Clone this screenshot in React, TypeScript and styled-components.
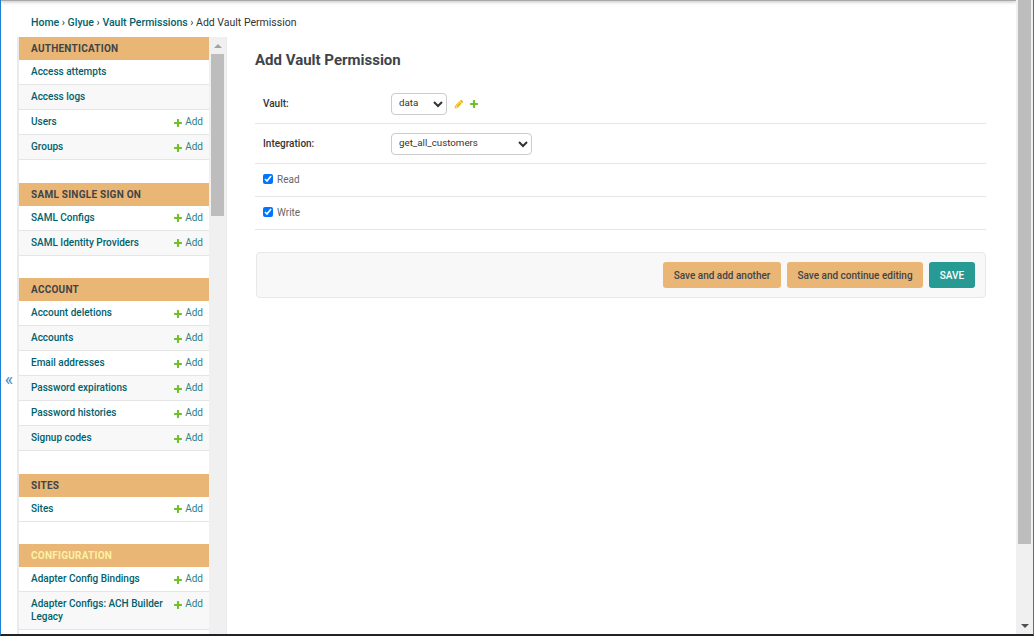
import React from "react";
import styled, { createGlobalStyle } from "styled-components";

const GlobalStyle = createGlobalStyle`
  html, body {
    margin: 0;
    padding: 0;
    overflow: hidden;
    background: #fff;
    font-family: Roboto, "Liberation Sans", sans-serif;
    font-size: 10px;
    color: #444;
  }
`;

const Screen = styled.div`
  width: 1034px;
  height: 636px;
  box-sizing: border-box;
  display: flex;
  border-left: 1px solid #1c7fd1;
  border-right: 1px solid #1c7fd1;
  border-bottom: 2px solid #1f2226;
  overflow: hidden;
`;

const Page = styled.div`
  width: 1015px;
  flex: none;
  display: flex;
  flex-direction: column;
`;

const TopShadow = styled.div`
  height: 1px;
  flex: none;
  background: #a8a8a8;
  box-shadow: 0 1px 3px rgba(0, 0, 0, 0.45);
`;

const Breadcrumbs = styled.div`
  flex: none;
  height: 36px;
  box-sizing: border-box;
  padding: 15px 0 0 30px;
  font-size: 10.5px;
  line-height: 13px;
  color: #333;
  a {
    color: #00616c;
    font-weight: 500;
    text-decoration: none;
  }
`;

const Body = styled.div`
  flex: 1;
  display: flex;
  min-height: 0;
`;

const Toggle = styled.div`
  width: 16px;
  flex: none;
  box-sizing: border-box;
  padding-top: 333px;
  text-align: center;
  color: #4a8fc0;
  font-size: 18px;
  line-height: 18px;
`;

const Sidebar = styled.nav`
  width: 210px;
  flex: none;
  display: flex;
  border-left: 2px solid #eaeaea;
  border-right: 1px solid #eaeaea;
  box-sizing: border-box;
`;

const ModuleList = styled.div`
  width: 190px;
  flex: none;
  overflow: hidden;
`;

const Module = styled.section`
  margin-bottom: 22.5px;
`;

const Caption = styled.h2<{ $active?: boolean }>`
  margin: 0;
  height: 23px;
  box-sizing: border-box;
  padding: 0 12px;
  display: flex;
  align-items: center;
  background: #e9b675;
  color: ${(p) => (p.$active ? "#fdf1a6" : "#40444a")};
  font-size: 10px;
  font-weight: 700;
  letter-spacing: 0.25px;
  text-transform: uppercase;
`;

const Row = styled.div`
  display: flex;
  justify-content: space-between;
  align-items: flex-start;
  box-sizing: border-box;
  min-height: 25px;
  padding: 6.25px 6px 5.25px 12px;
  border-bottom: 1px solid #e5e5e5;
  background: #fff;
  line-height: 12.5px;
  &:nth-of-type(even) {
    background: #f8f8f8;
  }
`;

const ModelLink = styled.a`
  color: #00616c;
  font-weight: 500;
  text-decoration: none;
  max-width: 138px;
`;

const AddLink = styled.a`
  flex: none;
  display: flex;
  align-items: center;
  gap: 2px;
  color: #2f7f88;
  text-decoration: none;
`;

const ScrollTrack = styled.div`
  width: 17px;
  flex: none;
  background: #f0f0f0;
  display: flex;
  flex-direction: column;
  align-items: center;
`;

const ArrowButton = styled.div<{ $down?: boolean }>`
  width: 100%;
  height: 17px;
  flex: none;
  display: flex;
  align-items: center;
  justify-content: center;
  &::before {
    content: "";
    border-left: 4px solid transparent;
    border-right: 4px solid transparent;
    ${(p) =>
      p.$down
        ? "border-top: 4px solid #505050;"
        : "border-bottom: 4px solid #a3a3a3;"}
  }
`;

const SideThumb = styled.div`
  width: 13px;
  height: 162px;
  flex: none;
  background: #bdbdbd;
`;

const Main = styled.main`
  width: 731px;
  margin-left: 28px;
  flex: none;
`;

const Title = styled.h1`
  margin: 0;
  height: 47px;
  box-sizing: border-box;
  padding-top: 13px;
  font-size: 15px;
  line-height: 20px;
  font-weight: 700;
  color: #40444a;
`;

const FormRow = styled.div<{ $height: number; $lift?: boolean }>`
  height: ${(p) => p.$height}px;
  box-sizing: border-box;
  display: flex;
  align-items: center;
  padding-left: 8px;
  padding-bottom: ${(p) => (p.$lift ? "2px" : "0")};
  border-bottom: 1px solid #e5e5e5;
`;

const Label = styled.label`
  width: 128px;
  flex: none;
  color: #333;
  font-weight: 500;
`;

const Select = styled.select<{ $width: number }>`
  width: ${(p) => p.$width}px;
  height: 22px;
  box-sizing: border-box;
  padding: 0 3px 3px;
  background: #fff;
  border: 1px solid #ccc;
  border-radius: 4px;
  color: #333;
  font-family: Roboto, "Liberation Sans", sans-serif;
  font-size: 9.75px;
`;

const RelatedIcons = styled.div`
  display: flex;
  align-items: center;
  gap: 5px;
  margin-left: 7px;
  margin-top: 1px;
`;

const CheckLabel = styled.label`
  display: flex;
  align-items: center;
  gap: 4px;
  color: #666;
`;

const Check = styled.input`
  width: 10px;
  height: 10px;
  margin: 0;
`;

const SubmitRow = styled.div`
  margin: 22px 0 0 1px;
  height: 46px;
  box-sizing: border-box;
  display: flex;
  justify-content: flex-end;
  align-items: center;
  gap: 6px;
  padding-right: 10px;
  background: #f8f8f8;
  border: 1px solid #e8e8e8;
  border-radius: 4px;
`;

const Button = styled.button<{ $width: number; $primary?: boolean }>`
  width: ${(p) => p.$width}px;
  height: 26px;
  padding: 0;
  border: 0;
  border-radius: 3px;
  background: ${(p) => (p.$primary ? "#279a94" : "#e9b675")};
  color: ${(p) => (p.$primary ? "#fff" : "#40444a")};
  font-family: Roboto, "Liberation Sans", sans-serif;
  font-size: 10px;
  font-weight: 500;
`;

const PageTrack = styled.div`
  width: 17px;
  flex: none;
  background: #f0f0f0;
  display: flex;
  flex-direction: column;
  align-items: center;
  justify-content: space-between;
`;

const PageThumb = styled.div`
  width: 13px;
  height: 544px;
  background: #bdbdbd;
`;

const PlusIcon = ({ size = 10 }: { size?: number }) => (
  <svg width={size} height={size} viewBox="0 0 1792 1792">
    <path
      fill="#70bf2b"
      d="M1600 796v192q0 40-28 68t-68 28h-416v416q0 40-28 68t-68 28h-192q-40 0-68-28t-28-68v-416h-416q-40 0-68-28t-28-68v-192q0-40 28-68t68-28h416v-416q0-40 28-68t68-28h192q40 0 68 28t28 68v416h416q40 0 68 28t28 68z"
    />
  </svg>
);

const PencilIcon = () => (
  <svg width={10} height={10} viewBox="0 0 1792 1792">
    <path
      fill="#efb80b"
      d="M491 1536l91-91-235-235-91 91v107h128v128h107zm523-928q0-22-22-22-10 0-17 7l-542 542q-7 7-7 17 0 22 22 22 10 0 17-7l542-542q7-7 7-17zm-54-192l416 416-832 832h-416v-416zm683 96q0 53-37 90l-166 166-416-416 166-165q36-38 90-38 53 0 91 38l235 234q37 39 37 91z"
    />
  </svg>
);

type Model = { name: string; add?: boolean };

const modules: { title: string; active?: boolean; models: Model[] }[] = [
  {
    title: "Authentication",
    models: [
      { name: "Access attempts" },
      { name: "Access logs" },
      { name: "Users", add: true },
      { name: "Groups", add: true },
    ],
  },
  {
    title: "SAML Single Sign On",
    models: [
      { name: "SAML Configs", add: true },
      { name: "SAML Identity Providers", add: true },
    ],
  },
  {
    title: "Account",
    models: [
      { name: "Account deletions", add: true },
      { name: "Accounts", add: true },
      { name: "Email addresses", add: true },
      { name: "Password expirations", add: true },
      { name: "Password histories", add: true },
      { name: "Signup codes", add: true },
    ],
  },
  { title: "Sites", models: [{ name: "Sites", add: true }] },
  {
    title: "Configuration",
    active: true,
    models: [
      { name: "Adapter Config Bindings", add: true },
      { name: "Adapter Configs: ACH Builder Legacy", add: true },
    ],
  },
];

export default function App() {
  return (
    <Screen>
      <GlobalStyle />
      <Page>
        <TopShadow />
        <Breadcrumbs>
          <a href="#">Home</a> › <a href="#">Glyue</a> ›{" "}
          <a href="#">Vault Permissions</a> › Add Vault Permission
        </Breadcrumbs>
        <Body>
          <Toggle>«</Toggle>
          <Sidebar>
            <ModuleList>
              {modules.map((m) => (
                <Module key={m.title}>
                  <Caption $active={m.active}>{m.title}</Caption>
                  <div>
                    {m.models.map((model) => (
                      <Row key={model.name}>
                        <ModelLink href="#">{model.name}</ModelLink>
                        {model.add && (
                          <AddLink href="#">
                            <PlusIcon />
                            Add
                          </AddLink>
                        )}
                      </Row>
                    ))}
                  </div>
                </Module>
              ))}
            </ModuleList>
            <ScrollTrack>
              <ArrowButton />
              <SideThumb />
            </ScrollTrack>
          </Sidebar>
          <Main>
            <Title>Add Vault Permission</Title>
            <FormRow $height={40}>
              <Label>Vault:</Label>
              <Select $width={56} defaultValue="data">
                <option>data</option>
              </Select>
              <RelatedIcons>
                <PencilIcon />
                <PlusIcon />
              </RelatedIcons>
            </FormRow>
            <FormRow $height={40}>
              <Label>Integration:</Label>
              <Select $width={141} defaultValue="get_all_customers">
                <option>get_all_customers</option>
              </Select>
            </FormRow>
            <FormRow $height={33} $lift>
              <CheckLabel>
                <Check type="checkbox" defaultChecked />
                Read
              </CheckLabel>
            </FormRow>
            <FormRow $height={33} $lift>
              <CheckLabel>
                <Check type="checkbox" defaultChecked />
                Write
              </CheckLabel>
            </FormRow>
            <SubmitRow>
              <Button $width={118}>Save and add another</Button>
              <Button $width={136}>Save and continue editing</Button>
              <Button $width={46} $primary>
                SAVE
              </Button>
            </SubmitRow>
          </Main>
        </Body>
      </Page>
      <PageTrack>
        <PageThumb />
        <ArrowButton $down />
      </PageTrack>
    </Screen>
  );
}
